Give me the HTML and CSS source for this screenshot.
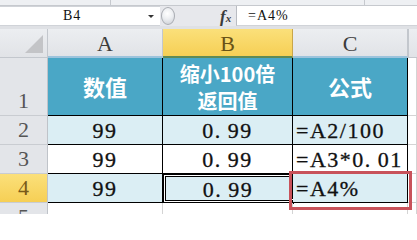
FILE: index.html
```html
<!DOCTYPE html>
<html>
<head>
<meta charset="utf-8">
<link rel="stylesheet" href="styles.css">
</head>
<body>
<div class="ribbon"><span class="rsep s1"></span><span class="rsep s2"></span></div>
<div class="fbar">
  <div class="namebox"><span class="ref">B4</span><span class="arrow"></span></div>
  <div class="mid"><span class="knob"></span><span class="fx"><i>f</i><small>x</small></span></div>
  <div class="formula">=A4%</div>
</div>
<div class="gap"></div>
<div class="sheet">
  <div class="ch corner"><span class="tri"></span></div>
  <div class="ch">A</div>
  <div class="ch sel">B</div>
  <div class="ch">C</div>
  <div class="ch extra"></div>

  <div class="rh bottom">1</div>
  <div class="c head">数值</div>
  <div class="c head two">缩小100倍<br>返回值</div>
  <div class="c head">公式</div>
  <div class="c empty"></div>

  <div class="rh">2</div>
  <div class="c tint num">99</div>
  <div class="c tint num">0<span class="dot">.</span>99</div>
  <div class="c tint num left">=A2/100</div>
  <div class="c empty"></div>

  <div class="rh">3</div>
  <div class="c num">99</div>
  <div class="c num">0<span class="dot">.</span>99</div>
  <div class="c num left">=A3*0<span class="dot">.</span>01</div>
  <div class="c empty"></div>

  <div class="rh rsel">4</div>
  <div class="c tint num">99</div>
  <div class="c tint num active">0<span class="dot">.</span>99<span class="handle"></span></div>
  <div class="c tint num left">=A4%</div>
  <div class="c empty"></div>

  <div class="rh">5</div>
  <div class="c blank"></div>
  <div class="c blank"></div>
  <div class="c blank"></div>
  <div class="c blank"></div>
</div>
<div class="mark"></div>
</body>
</html>
```
FILE: styles.css
```css
html, body {
  margin: 0;
  padding: 0;
}
body {
  width: 417px;
  height: 214px;
  overflow: hidden;
  position: relative;
  background: #fff;
  font-family: "Liberation Serif", serif;
}
.ribbon {
  height: 5px;
  background: #eef0f3;
  border-bottom: 1px solid #c6c9ce;
  position: relative;
}
.rsep {
  position: absolute;
  top: 0;
  width: 1px;
  height: 5px;
  background: #c6c9ce;
}
.s1 { left: 110px; }
.s2 { left: 364px; }
.fbar {
  display: flex;
  height: 20px;
  background: #e7e8ec;
}
.namebox {
  width: 160px;
  background: #fff;
  border-top: 1px solid #d0d3d8;
  border-bottom: 1px solid #d0d3d8;
  box-sizing: border-box;
  display: flex;
  align-items: center;
  position: relative;
}
.ref {
  font-family: "Liberation Serif", serif;
  font-size: 14px;
  letter-spacing: 1px;
  color: #111;
  margin-left: 63px;
}
.arrow {
  position: absolute;
  left: 148px;
  top: 8px;
  width: 0;
  height: 0;
  border-left: 3px solid transparent;
  border-right: 3px solid transparent;
  border-top: 3px solid #333;
}
.mid {
  width: 76px;
  display: flex;
  align-items: center;
  position: relative;
}
.knob {
  width: 12px;
  height: 16px;
  margin-left: 1px;
  border-radius: 50%;
  border: 1px solid #a9acb2;
  background: radial-gradient(circle at 45% 35%, #ffffff 0, #eceef1 45%, #c9ccd2 100%);
}
.fx {
  margin-left: 45px;
  font-family: "Liberation Serif", serif;
  font-weight: bold;
  color: #3a3a3a;
  font-size: 17px;
  line-height: 1;
}
.fx i { font-style: italic; }
.fx small { font-size: 11px; font-style: italic; }
.formula {
  flex: 1;
  background: #fff;
  border-left: 1px solid #b9bcc2;
  border-bottom: 1px solid #d0d3d8;
  font-family: "Liberation Serif", serif;
  font-size: 14px;
  letter-spacing: 1px;
  color: #111;
  padding-left: 11px;
  display: flex;
  align-items: center;
}
.gap {
  height: 3px;
  background: #dfe1e5;
}
.sheet {
  display: grid;
  grid-template-columns: 48px 115px 130px 115px 9px;
  grid-template-rows: 29px 58px 29px 29px 29px 29px;
}
.ch {
  box-sizing: border-box;
  background: linear-gradient(#eceef1, #e1e3e7);
  border-right: 1px solid #c3c7cd;
  border-bottom: 2px solid #9cc3dc;
  font-family: "Liberation Serif", serif;
  font-size: 22px;
  color: #3c3c3c;
  display: flex;
  align-items: center;
  justify-content: center;
  padding-top: 2px;
}
.corner {
  border-bottom: 1px solid #c3c7cd;
  position: relative;
}
.tri {
  position: absolute;
  right: 4px;
  bottom: 4px;
  width: 0;
  height: 0;
  border-left: 18px solid transparent;
  border-bottom: 18px solid #c3c4c7;
}
.ch.sel {
  background: linear-gradient(#fbe07a, #f6cf55);
  color: #6a5216;
  border-bottom: 2px solid #5f8a55;
  border-right: 1px solid #c9a64a;
}
.ch.extra {
  border-bottom: 1px solid #c3c7cd;
  border-left: 1px solid #c3c7cd;
  border-right: none;
}
.rh {
  box-sizing: border-box;
  background: #e3e5e9;
  border-right: 1px solid #bfc3c9;
  border-bottom: 1px solid #c9ccd1;
  font-family: "Liberation Serif", serif;
  font-size: 22px;
  color: #555;
  display: flex;
  align-items: center;
  justify-content: center;
}
.rh.bottom {
  align-items: flex-end;
  padding-bottom: 1px;
}
.rh.rsel {
  background: linear-gradient(#fbe07a, #f6cf55);
  color: #7a5a18;
}
.c {
  box-sizing: border-box;
  border-right: 1px solid #000;
  border-bottom: 1px solid #000;
  display: flex;
  align-items: center;
  justify-content: center;
  position: relative;
}
.head {
  background: #4aa7c6;
  color: #fff;
  font-family: "Noto Sans CJK SC", sans-serif;
  font-weight: 700;
  font-size: 22px;
  line-height: 25px;
  text-align: center;
}
.head.two {
  font-size: 20px;
  line-height: 27px;
}
.tint {
  background: #dbeef4;
}
.num {
  font-family: "Liberation Serif", serif;
  font-size: 22px;
  letter-spacing: 1.5px;
  color: #111;
  -webkit-text-stroke: 0.3px #111;
  padding-top: 2px;
}
.dot {
  margin-right: 6px;
}
.left {
  justify-content: flex-start;
  padding-left: 3px;
}
.empty, .blank {
  border-right: 1px solid #d4d4d4;
  border-bottom: 1px solid #d4d4d4;
}
.active {
  border: 1px solid #000;
  box-shadow: inset 0 0 0 1px #fff, inset 0 0 0 2px #000;
}
.handle {
  position: absolute;
  right: -3px;
  bottom: -3px;
  width: 4px;
  height: 4px;
  background: #000;
  border: 1px solid #fff;
}
.mark {
  position: absolute;
  left: 289px;
  top: 171px;
  width: 123px;
  height: 39px;
  box-sizing: border-box;
  border: 3.5px solid #c8525a;
}
```
